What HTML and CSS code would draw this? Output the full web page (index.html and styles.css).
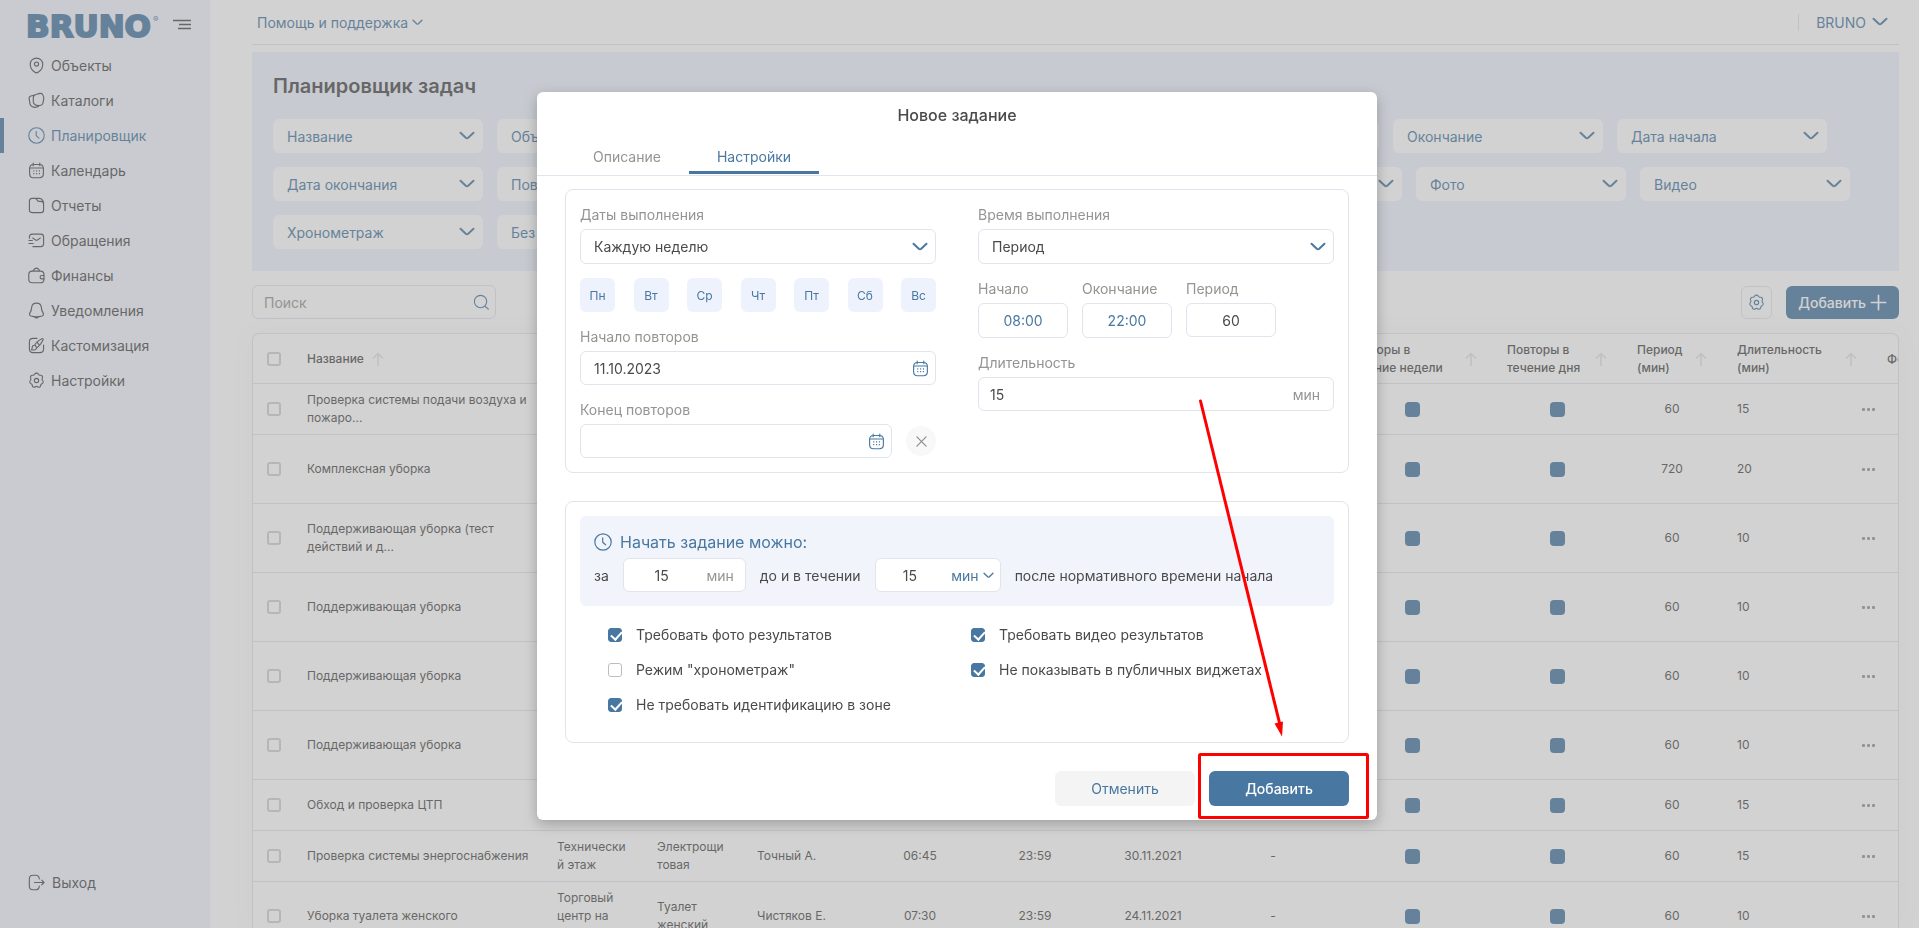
FILE: index.html
```html
<!DOCTYPE html>
<html lang="ru">
<head>
<meta charset="utf-8">
<title>Планировщик задач</title>
<link rel="stylesheet" href="styles.css">
</head>
<body>
<svg class="sprite" aria-hidden="true">
  <symbol id="pin" viewBox="0 0 18 18"><path d="M9 1.2c-3.8 0-6.6 2.9-6.6 6.400 0 3.700 2.500 7 4.900 8.600 1.100.7 2.300.7 3.400 0 2.400-1.600 4.900-4.900 4.900-8.600C15.600 4.100 12.800 1.200 9 1.200z"/><circle cx="9" cy="7.500" r="2.200"/></symbol>
  <symbol id="cards" viewBox="0 0 18 18"><path d="M8.300 2.700 12.600 1.500c1.200-.3 2.200.1 2.900 1.100.9 1.300 1.500 3.200 1.100 5.300l-.8 3.800c-.3 1.300-1 2.100-2.300 2.300-2 .4-4.400.3-6-.6-1.300-.7-1.900-1.600-1.900-3V6c0-1.700 1-2.900 2.700-3.300z"/><path d="M6.300 3.400 3 4.300C1.600 4.700 1 5.700 1.200 7.200l.9 5.300c.3 1.500 1.100 2.600 2.600 3.200 1.700.7 3.800.6 5.400 0 .8-.3 1.400-.8 1.700-1.400"/></symbol>
  <symbol id="clock" viewBox="0 0 18 18"><circle cx="9" cy="9" r="8.200"/><path d="M8.700 4.800v4.400l2.900 2.600"/></symbol>
  <symbol id="calendar" viewBox="0 0 18 18"><path d="M1.700 7c0-2.900 1.200-4.400 4-4.400h6.600c2.800 0 4 1.500 4 4.400v5.300c0 2.900-1.200 4.400-4 4.400H5.700c-2.800 0-4-1.500-4-4.400zM1.700 6.300h14.600M5.500 1v3M12.500 1v3"/><path class="dots" d="M5.500 9.500h1.200M8.500 9.500h1.200M11.500 9.500h1.200M5.500 12.300h1.200M8.500 12.300h1.200M11.500 12.300h1.200"/></symbol>
  <symbol id="folder" viewBox="0 0 18 18"><path d="M1.500 4.300c0-1.900.9-2.800 2.800-2.800h3c1.300 0 1.700.4 2.100 1.400.5 1.200 1 1.700 2.400 1.700h1.900c1.900 0 2.800.9 2.800 2.800v6.300c0 1.900-.9 2.800-2.800 2.800H4.300c-1.900 0-2.800-.9-2.800-2.800zM8 1.500h4c1.900 0 3 .8 4 2.800l.5 2.200"/></symbol>
  <symbol id="mail" viewBox="0 0 18 18"><path d="M1.500 6.500V5.300c0-2 1-3 3-3h9c2 0 3 1 3 3v7.200c0 2-1 3-3 3H5.200M5 6.400l2.700 1.900c.9.600 1.700.6 2.600 0L13 6.400M1 9h3.600M1 12.200h4.500"/></symbol>
  <symbol id="wallet" viewBox="0 0 18 18"><path d="M.8 8.200c0-2.500 1.200-3.800 3.700-3.800h8.700c2.500 0 3.700 1.300 3.700 3.800v4.700c0 2.500-1.200 3.800-3.700 3.800H4.500C2 16.700.8 15.400.8 12.900zM5 4.300l2-2.200c1.200-1.200 2.600-1.200 3.800 0l2 2.200M17.200 9h-2.600c-2.400 0-2.400 3.600 0 3.600h2.600"/></symbol>
  <symbol id="bell" viewBox="0 0 18 18"><path d="M9 1.200c-3 0-5 2.100-5.200 5-.2 2.600-.6 3.700-1.700 5.300-1 1.500-.4 2.900 1.100 3.400 3.700 1.100 7.900 1.100 11.600 0 1.500-.5 2.100-1.900 1.100-3.400-1.100-1.600-1.500-2.700-1.700-5.300-.2-2.900-2.200-5-5.200-5zM6.800 15.900c1.100 1.300 3.300 1.300 4.400 0"/></symbol>
  <symbol id="brush" viewBox="0 0 18 18"><path d="M9.500 1.500H5.300c-2.500 0-3.800 1.300-3.800 3.800v7.400c0 2.500 1.300 3.800 3.800 3.800h7.400c2.500 0 3.800-1.300 3.800-3.800V8.500"/><path d="M9.300 11.300C11.700 10 14 7.200 16 3c.4-.9-.3-1.600-1.200-1.200C11 3.600 8.400 6 7.200 8.400zM7.200 8.400l2.100 2.900M6.900 8.700c-1.800.1-2.500 1-2.500 2.600 0 .9-.2 1.500-.8 2.200 2.800.6 5.400.1 5.700-2.200M10 6l2 2.600"/></symbol>
  <symbol id="gear" viewBox="0 0 18 18"><circle cx="9" cy="9" r="2.300"/><path d="M7 2.400c.8-1.600 3.200-1.600 4 0 .5.900 1 1.100 2 1 1.800-.2 3 1.700 2.100 3.300-.5.900-.4 1.300.2 2.100 1.400 1.200.9 3.100-.6 3.600-.9.400-1.200.7-1.200 1.600 0 1.800-2 2.700-3.300 1.600-.8-.6-1.600-.6-2.400 0-1.300 1.100-3.300.2-3.300-1.600 0-.9-.3-1.200-1.200-1.600-1.500-.5-2-2.400-.6-3.600.6-.8.700-1.200.2-2.100C2 5.100 3.200 3.200 5 3.400c1 .1 1.500-.1 2-1z"/></symbol>
  <symbol id="exit" viewBox="0 0 18 18"><path d="M12 5.200C11.800 2.600 10.700 1.300 8 1.300H5.300c-2.700 0-3.900 1.300-3.900 4v7.400c0 2.700 1.200 4 3.900 4H8c2.700 0 3.800-1.300 4-3.900M6.800 9h10M14.500 6.500 17 9l-2.500 2.500"/></symbol>
  <symbol id="chevron" viewBox="0 0 16 10"><path d="m1.500 1.800 5.300 5c.8.700 1.600.7 2.400 0l5.300-5"/></symbol>
  <symbol id="search" viewBox="0 0 18 18"><circle cx="8" cy="8" r="6.500"/><path d="m13 13.200 3.300 2.800"/></symbol>
  <symbol id="plus" viewBox="0 0 18 18"><path d="M9 1.500v15M1.500 9h15"/></symbol>
  <symbol id="sort" viewBox="0 0 12 14"><path d="M6 13.500V1.500M1.500 6 6 1.500 10.500 6"/></symbol>
  <symbol id="cross" viewBox="0 0 12 12"><path d="m1 1 10 10M11 1 1 11"/></symbol>
</svg>

<div class="app">
  <aside class="sidebar">
    <div class="brand">
      <a class="logo" href="#">BRUNO<sup class="logo-mark">®</sup></a>
      <button class="burger" type="button" aria-label="Меню"><svg viewBox="0 0 18 11"><path d="M0 1.500h18M6 5.500h12M5 9.500h13"/></svg></button>
    </div>
    <nav class="nav">
      <a class="nav-item" href="#"><svg class="icon"><use href="#pin"/></svg>Объекты</a>
      <a class="nav-item" href="#"><svg class="icon"><use href="#cards"/></svg>Каталоги</a>
      <a class="nav-item active" href="#"><svg class="icon"><use href="#clock"/></svg>Планировщик</a>
      <a class="nav-item" href="#"><svg class="icon"><use href="#calendar"/></svg>Календарь</a>
      <a class="nav-item" href="#"><svg class="icon"><use href="#folder"/></svg>Отчеты</a>
      <a class="nav-item" href="#"><svg class="icon"><use href="#mail"/></svg>Обращения</a>
      <a class="nav-item" href="#"><svg class="icon"><use href="#wallet"/></svg>Финансы</a>
      <a class="nav-item" href="#"><svg class="icon"><use href="#bell"/></svg>Уведомления</a>
      <a class="nav-item" href="#"><svg class="icon"><use href="#brush"/></svg>Кастомизация</a>
      <a class="nav-item" href="#"><svg class="icon"><use href="#gear"/></svg>Настройки</a>
    </nav>
    <a class="nav-item nav-exit" href="#"><svg class="icon"><use href="#exit"/></svg>Выход</a>
  </aside>

  <main class="main">
    <header class="topbar">
      <button class="top-link" type="button">Помощь и поддержка<svg class="chevron small"><use href="#chevron"/></svg></button>
      <button class="top-link account" type="button">BRUNO<svg class="chevron"><use href="#chevron"/></svg></button>
    </header>

    <section class="filters">
      <h1 class="page-title">Планировщик задач</h1>
      <div class="filter-row">
        <div class="pick"><select aria-label="Название"><option>Название</option></select><svg class="chevron"><use href="#chevron"/></svg></div>
        <div class="pick"><select aria-label="Объект"><option>Объект</option></select><svg class="chevron"><use href="#chevron"/></svg></div>
        <div class="pick"><select aria-label="Зона"><option>Зона</option></select><svg class="chevron"><use href="#chevron"/></svg></div>
        <div class="pick"><select aria-label="Сотрудник"><option>Сотрудник</option></select><svg class="chevron"><use href="#chevron"/></svg></div>
        <div class="pick"><select aria-label="Начало"><option>Начало</option></select><svg class="chevron"><use href="#chevron"/></svg></div>
        <div class="pick"><select aria-label="Окончание"><option>Окончание</option></select><svg class="chevron"><use href="#chevron"/></svg></div>
        <div class="pick"><select aria-label="Дата начала"><option>Дата начала</option></select><svg class="chevron"><use href="#chevron"/></svg></div>
      </div>
      <div class="filter-row">
        <div class="pick"><select aria-label="Дата окончания"><option>Дата окончания</option></select><svg class="chevron"><use href="#chevron"/></svg></div>
        <div class="pick wide"><select aria-label="Повторы в течение недели"><option>Повторы в течение недели</option></select><svg class="chevron"><use href="#chevron"/></svg></div>
        <div class="pick"><select aria-label="Повторы в день"><option>Повторы в день</option></select><svg class="chevron"><use href="#chevron"/></svg></div>
        <div class="pick"><select aria-label="Период"><option>Период</option></select><svg class="chevron"><use href="#chevron"/></svg></div>
        <div class="pick"><select aria-label="Длительность"><option>Длительность</option></select><svg class="chevron"><use href="#chevron"/></svg></div>
        <div class="pick"><select aria-label="Фото"><option>Фото</option></select><svg class="chevron"><use href="#chevron"/></svg></div>
        <div class="pick"><select aria-label="Видео"><option>Видео</option></select><svg class="chevron"><use href="#chevron"/></svg></div>
      </div>
      <div class="filter-row">
        <div class="pick"><select aria-label="Хронометраж"><option>Хронометраж</option></select><svg class="chevron"><use href="#chevron"/></svg></div>
        <div class="pick"><select aria-label="Без идентификации"><option>Без идентификации</option></select><svg class="chevron"><use href="#chevron"/></svg></div>
      </div>
    </section>

    <div class="toolbar">
      <label class="search"><input type="search" placeholder="Поиск" aria-label="Поиск"><svg class="icon"><use href="#search"/></svg></label>
      <button class="tool-btn" type="button" aria-label="Настройки таблицы"><svg class="icon"><use href="#gear"/></svg></button>
      <button class="add-btn" type="button">Добавить<svg class="icon"><use href="#plus"/></svg></button>
    </div>

    <div class="table-box">
      <table class="tasks">
        <colgroup><col class="c-check"><col class="c-name"><col class="c-place"><col class="c-place"><col class="c-staff"><col class="c-start"><col class="c-end"><col class="c-date"><col class="c-date"><col class="c-week"><col class="c-day"><col class="c-period"><col class="c-length"><col class="c-photo"><col class="c-more"></colgroup>
        <thead>
          <tr>
            <th><input class="box" type="checkbox" aria-label="Выбрать все"></th>
            <th><div class="head tight">Название<svg class="sort"><use href="#sort"/></svg></div></th>
            <th>Объект</th><th>Зона</th><th>Сотрудник</th><th>Начало</th><th>Конец</th><th>Дата начала</th><th>Дата конца</th>
            <th><div class="head">Повторы в<br>течение недели<svg class="sort"><use href="#sort"/></svg></div></th>
            <th><div class="head">Повторы в<br>течение дня<svg class="sort"><use href="#sort"/></svg></div></th>
            <th><div class="head">Период<br>(мин)<svg class="sort"><use href="#sort"/></svg></div></th>
            <th><div class="head">Длительность<br>(мин)<svg class="sort"><use href="#sort"/></svg></div></th>
            <th>Фото</th><th></th>
          </tr>
        </thead>
        <tbody>
          <tr><td><input class="box" type="checkbox" aria-label="Выбрать"></td><td>Проверка системы подачи воздуха и пожаро...</td><td></td><td></td><td></td><td></td><td></td><td></td><td></td><td class="mid"><i class="mark"></i></td><td class="mid"><i class="mark"></i></td><td class="mid">60</td><td>15</td><td></td><td class="more"><button type="button" aria-label="Действия"></button></td></tr>
          <tr class="tall"><td><input class="box" type="checkbox" aria-label="Выбрать"></td><td>Комплексная уборка</td><td></td><td></td><td></td><td></td><td></td><td></td><td></td><td class="mid"><i class="mark"></i></td><td class="mid"><i class="mark"></i></td><td class="mid">720</td><td>20</td><td></td><td class="more"><button type="button" aria-label="Действия"></button></td></tr>
          <tr class="tall"><td><input class="box" type="checkbox" aria-label="Выбрать"></td><td>Поддерживающая уборка (тест действий и д...</td><td></td><td></td><td></td><td></td><td></td><td></td><td></td><td class="mid"><i class="mark"></i></td><td class="mid"><i class="mark"></i></td><td class="mid">60</td><td>10</td><td></td><td class="more"><button type="button" aria-label="Действия"></button></td></tr>
          <tr class="tall"><td><input class="box" type="checkbox" aria-label="Выбрать"></td><td>Поддерживающая уборка</td><td></td><td></td><td></td><td></td><td></td><td></td><td></td><td class="mid"><i class="mark"></i></td><td class="mid"><i class="mark"></i></td><td class="mid">60</td><td>10</td><td></td><td class="more"><button type="button" aria-label="Действия"></button></td></tr>
          <tr class="tall"><td><input class="box" type="checkbox" aria-label="Выбрать"></td><td>Поддерживающая уборка</td><td></td><td></td><td></td><td></td><td></td><td></td><td></td><td class="mid"><i class="mark"></i></td><td class="mid"><i class="mark"></i></td><td class="mid">60</td><td>10</td><td></td><td class="more"><button type="button" aria-label="Действия"></button></td></tr>
          <tr class="tall"><td><input class="box" type="checkbox" aria-label="Выбрать"></td><td>Поддерживающая уборка</td><td></td><td></td><td></td><td></td><td></td><td></td><td></td><td class="mid"><i class="mark"></i></td><td class="mid"><i class="mark"></i></td><td class="mid">60</td><td>10</td><td></td><td class="more"><button type="button" aria-label="Действия"></button></td></tr>
          <tr><td><input class="box" type="checkbox" aria-label="Выбрать"></td><td>Обход и проверка ЦТП</td><td></td><td></td><td></td><td></td><td></td><td></td><td></td><td class="mid"><i class="mark"></i></td><td class="mid"><i class="mark"></i></td><td class="mid">60</td><td>15</td><td></td><td class="more"><button type="button" aria-label="Действия"></button></td></tr>
          <tr><td><input class="box" type="checkbox" aria-label="Выбрать"></td><td>Проверка системы энергоснабжения</td><td>Технический этаж</td><td>Электрощитовая</td><td>Точный А.</td><td class="mid">06:45</td><td class="mid">23:59</td><td class="mid">30.11.2021</td><td class="mid">-</td><td class="mid"><i class="mark"></i></td><td class="mid"><i class="mark"></i></td><td class="mid">60</td><td>15</td><td></td><td class="more"><button type="button" aria-label="Действия"></button></td></tr>
          <tr class="tall"><td><input class="box" type="checkbox" aria-label="Выбрать"></td><td>Уборка туалета женского</td><td>Торговый центр на Садовой</td><td>Туалет женский</td><td>Чистяков Е.</td><td class="mid">07:30</td><td class="mid">23:59</td><td class="mid">24.11.2021</td><td class="mid">-</td><td class="mid"><i class="mark"></i></td><td class="mid"><i class="mark"></i></td><td class="mid">60</td><td>10</td><td></td><td class="more"><button type="button" aria-label="Действия"></button></td></tr>
        </tbody>
      </table>
    </div>
  </main>
</div>

<div class="overlay">
  <form class="modal" role="dialog" aria-labelledby="modal-title">
    <h2 class="modal-title" id="modal-title">Новое задание</h2>
    <div class="tabs" role="tablist">
      <button class="tab" type="button" role="tab">Описание</button>
      <button class="tab current" type="button" role="tab" aria-selected="true">Настройки</button>
    </div>

    <div class="modal-body">
      <section class="card columns">
        <div class="stack">
          <div class="field">
            <label for="dates">Даты выполнения</label>
            <div class="pick"><select id="dates"><option>Каждую неделю</option></select><svg class="chevron"><use href="#chevron"/></svg></div>
          </div>
          <div class="days">
            <button type="button">Пн</button><button type="button">Вт</button><button type="button">Ср</button><button type="button">Чт</button><button type="button">Пт</button><button type="button">Сб</button><button type="button">Вс</button>
          </div>
          <div class="field">
            <label for="from">Начало повторов</label>
            <div class="control"><input id="from" type="text" value="11.10.2023"><svg class="icon"><use href="#calendar"/></svg></div>
          </div>
          <div class="field">
            <label for="till">Конец повторов</label>
            <div class="line">
              <div class="control"><input id="till" type="text"><svg class="icon"><use href="#calendar"/></svg></div>
              <button class="clear" type="button" aria-label="Очистить"><svg><use href="#cross"/></svg></button>
            </div>
          </div>
        </div>
        <div class="stack">
          <div class="field">
            <label for="time">Время выполнения</label>
            <div class="pick"><select id="time"><option>Период</option></select><svg class="chevron"><use href="#chevron"/></svg></div>
          </div>
          <div class="line">
            <div class="field third"><label for="t1">Начало</label><div class="control time"><input id="t1" type="text" value="08:00"></div></div>
            <div class="field third"><label for="t2">Окончание</label><div class="control time"><input id="t2" type="text" value="22:00"></div></div>
            <div class="field third"><label for="t3">Период</label><div class="control centered"><input id="t3" type="text" value="60"></div></div>
          </div>
          <div class="field">
            <label for="len">Длительность</label>
            <div class="control length"><input id="len" type="text" value="15"><span class="unit">мин</span></div>
          </div>
        </div>
      </section>

      <section class="card rules">
        <div class="start">
          <h3 class="start-title"><svg class="icon"><use href="#clock"/></svg>Начать задание можно:</h3>
          <div class="start-line">
            <label for="before">за</label>
            <div class="control centered span"><input id="before" type="text" value="15"><span class="unit">мин</span></div>
            <label for="after">до и в течении</label>
            <div class="control centered span with-pick"><input id="after" type="text" value="15"><button class="unit-pick" type="button">мин<svg class="chevron small"><use href="#chevron"/></svg></button></div>
            <span>после нормативного времени начала</span>
          </div>
        </div>
        <div class="checks">
          <label><input class="box" type="checkbox" checked>Требовать фото результатов</label>
          <label><input class="box" type="checkbox" checked>Требовать видео результатов</label>
          <label><input class="box" type="checkbox">Режим "хронометраж"</label>
          <label><input class="box" type="checkbox" checked>Не показывать в публичных виджетах</label>
          <label><input class="box" type="checkbox" checked>Не требовать идентификацию в зоне</label>
        </div>
      </section>

      <footer class="actions">
        <button class="btn plain" type="button">Отменить</button>
        <button class="btn primary" type="submit">Добавить</button>
      </footer>
    </div>

    <svg class="pointer" viewBox="0 0 174 422" aria-hidden="true">
      <path class="stroke" d="M4.500 2 84 326"/>
      <path class="tip" d="m78.500 324.500 8.500-2-1 15z"/>
      <rect class="stroke" x="3.500" y="355.500" width="168" height="63" rx="1"/>
    </svg>
  </form>
</div>
</body>
</html>
```
FILE: styles.css
```css
:root {
  --blue: #4878a1;
  --text: #4a4a4a;
  --muted: #949494;
  --line: #e1e4ec;
  --tint: #edf2fd;
}

* { box-sizing: border-box; }

body {
  margin: 0;
  overflow: hidden;
  background: #fff;
  color: var(--text);
  font: 14px/21px Inter, "Liberation Sans", sans-serif;
}

h1, h2, h3 { margin: 0; }
a { color: inherit; text-decoration: none; }
button, input, select { margin: 0; padding: 0; border: 0; background: none; color: inherit; font: inherit; }
svg { flex: none; fill: none; stroke: currentColor; stroke-linecap: round; stroke-linejoin: round; }

.sprite { position: absolute; width: 0; height: 0; }
.icon { width: 17px; height: 17px; stroke-width: 1.2; }
.dots { stroke-width: 1.3; stroke-linecap: butt; }
.chevron { width: 16px; height: 10px; color: var(--blue); stroke-width: 2; }
.chevron.small { width: 11px; height: 7px; }

/* Shell */
.app { display: flex; height: 100vh; }

.sidebar {
  display: flex;
  flex: none;
  flex-direction: column;
  width: 210px;
  padding-bottom: 28px;
  background: #f1f4fb;
}

.brand { display: flex; align-items: flex-start; justify-content: space-between; height: 48px; padding: 11px 19px 0 26px; }
.logo {
  display: flex;
  color: var(--blue);
  font: bold 31px/31px "DejaVu Sans", sans-serif;
  -webkit-text-stroke: 2px var(--blue);
}
.logo-mark { font: 8px/8px Inter, sans-serif; -webkit-text-stroke: 0; padding: 4px 0 0 2px; }
.burger { display: flex; width: 18px; padding-top: 8px; }
.burger svg { width: 18px; height: 11px; stroke-width: 1.7; stroke-linecap: butt; }

.nav-item { display: flex; align-items: center; gap: 6px; height: 35px; padding-left: 28px; }
.nav-item.active { padding-left: 24px; border-left: 4px solid var(--blue); color: var(--blue); }
.nav-exit { gap: 7px; margin-top: auto; }

.main { display: flex; flex: 1; flex-direction: column; min-width: 0; padding: 0 20px 0 42px; }

.topbar { display: flex; flex: none; justify-content: space-between; align-items: center; height: 45px; margin-bottom: 7px; border-bottom: 1px solid var(--line); }
.top-link { display: flex; align-items: center; gap: 4px; padding: 0 5px; color: var(--blue); }
.account { gap: 6px; height: 17px; padding: 0 11px 0 17px; border-left: 1px solid var(--line); }

/* Filters */
.filters { display: flex; flex: none; flex-direction: column; gap: 14px; padding: 20px 21px 22px; overflow: hidden; background: var(--tint); }
.page-title { margin-bottom: 5px; font-size: 20px; font-weight: 600; line-height: 28px; }
.filter-row { display: flex; gap: 14px; }

.pick { position: relative; display: flex; align-items: center; height: 35px; border: 1px solid var(--line); border-radius: 6px; background: #fff; }
.pick select { width: 100%; height: 100%; padding: 0 36px 0 13px; appearance: none; border-radius: 6px; }
.pick .chevron { position: absolute; right: 7px; pointer-events: none; }
.filter-row .pick { flex: none; width: 210px; height: 34px; border-color: #fff; color: var(--blue); }
.filter-row .wide { width: 233px; }

/* Toolbar */
.toolbar { display: flex; flex: none; align-items: center; gap: 14px; margin: 14px 0; }
.search { display: flex; align-items: center; width: 244px; height: 34px; margin-right: auto; padding: 0 5px 0 11px; border: 1px solid var(--line); border-radius: 6px; color: var(--blue); }
.search input { flex: 1; min-width: 0; outline: 0; }
.search input::placeholder { color: var(--muted); opacity: 1; }
.tool-btn { display: flex; align-items: center; justify-content: center; width: 31px; height: 33px; border: 1px solid var(--line); border-radius: 6px; color: var(--blue); }
.add-btn { display: flex; align-items: center; gap: 4px; height: 33px; padding: 0 12px; border-radius: 6px; background: var(--blue); color: #fff; font-weight: 500; }
.add-btn .icon { stroke-width: 1.800; }

/* Table */
.table-box { flex: 1; min-height: 0; overflow: hidden; border: 1px solid var(--line); border-bottom: 0; border-radius: 7px 7px 0 0; box-shadow: 0 0 28px rgba(0, 0, 0, .04); }
.tasks { width: 1779px; table-layout: fixed; border-spacing: 0; font-size: 12px; line-height: 18px; }
.tasks th, .tasks td { height: 51px; padding: 7px 15px; border-bottom: 1px solid var(--line); text-align: left; vertical-align: middle; overflow-wrap: anywhere; }
.tasks th { height: 50px; padding: 6px 15px; font-weight: 500; }
.tasks .tall td { height: 69px; }
.tasks .mid { text-align: center; }
.tasks th:first-child, .tasks td:first-child { padding: 0 0 0 14px; }
.tasks td:nth-child(2) { padding-right: 10px; }
.c-check { width: 39px; }
.c-name { width: 250px; }
.c-place { width: 100px; }
.c-staff { width: 121px; }
.c-start { width: 114px; }
.c-end { width: 116px; }
.c-date { width: 120px; }
.c-week { width: 159px; }
.c-day { width: 130px; }
.c-period { width: 100px; }
.c-length { width: 150px; }
.c-photo { width: 100px; }
.c-more { width: 60px; }

.head { display: flex; position: relative; align-items: center; }
.head .sort { position: absolute; right: 0; }
.head.tight { gap: 8px; }
.head.tight .sort { position: static; }
.sort { width: 12px; height: 14px; color: #dfe1e8; stroke-width: 1.500; }

.mark { display: inline-block; width: 15px; height: 15px; border-radius: 4px; background: var(--blue); vertical-align: middle; }
.tasks .more { position: sticky; right: 0; padding: 0; background: #fff; text-align: center; }
.more button { width: 3px; height: 3px; border-radius: 1px; background: var(--muted); box-shadow: -5px 0 var(--muted), 5px 0 var(--muted); vertical-align: middle; }

.box { display: block; flex: none; position: relative; width: 14px; height: 14px; margin: 0; appearance: none; border: 1px solid #bdbdbd; border-radius: 3px; background: #fff; }
.tasks .box { border-width: 2px; border-color: #cfcfcf; }
.box:checked { border-color: var(--blue); background: var(--blue); }
.box:checked::before { content: ""; position: absolute; left: 4px; top: 0; width: 5px; height: 9px; border: solid #fff; border-width: 0 2px 2px 0; transform: rotate(42deg); }

/* Dialog */
.overlay { position: fixed; inset: 0; display: flex; align-items: flex-start; justify-content: center; padding: 92px 5px 0 0; background: rgba(145, 145, 145, .41); }
.modal { position: relative; width: 840px; border-radius: 6px; background: #fff; box-shadow: 0 4px 14px rgba(0, 0, 0, .25); }
.modal-title { padding: 11px 0 13px; font-size: 16px; font-weight: 500; line-height: 24px; text-align: center; }
.tabs { display: flex; height: 36px; padding: 0 28px; border-bottom: 1px solid var(--line); }
.tab { height: 34px; padding: 1px 28px 0; border-bottom: 3px solid transparent; color: var(--muted); }
.tab.current { border-bottom-color: var(--blue); border-radius: 2px 2px 0 0; color: var(--blue); }
.modal-body { display: flex; flex-direction: column; gap: 28px; padding: 13px 28px 14px; }

.card { padding: 14px; border: 1px solid var(--line); border-radius: 8px; }
.columns { display: grid; grid-template-columns: 1fr 1fr; gap: 42px; }
.stack { display: flex; flex-direction: column; gap: 14px; }
.field { display: flex; flex-direction: column; gap: 4px; }
.field label { color: var(--muted); }
.line { display: flex; align-items: center; gap: 14px; }
.line > .control { flex: 1; }

.control { display: flex; align-items: center; height: 34px; padding: 0 6px 0 13px; border: 1px solid var(--line); border-radius: 6px; background: #fff; }
.control input { flex: 1; width: 100%; min-width: 0; outline: 0; }
.control .icon { color: var(--blue); }
.third { width: 90px; align-self: flex-start; }
.centered, .time { padding: 0 11px; text-align: center; }
.time { height: 35px; color: var(--blue); }
.control.centered input, .control.time input { text-align: center; }
.length { padding: 0 13px 0 11px; }
.unit { color: var(--muted); }

.days { display: flex; justify-content: space-between; }
.days button { width: 35px; height: 34px; border-radius: 6px; background: var(--tint); color: var(--blue); font-size: 12px; }
.clear { display: flex; align-items: center; justify-content: center; width: 30px; height: 30px; border-radius: 50%; background: #f8f8f8; color: #8c8c8c; }
.clear svg { width: 11px; height: 11px; stroke-width: 1.300; }

.start { padding: 14px; border-radius: 6px; background: #f1f4fb; }
.start-title { display: flex; align-items: center; gap: 8px; margin-bottom: 4px; color: var(--blue); font-size: 16px; font-weight: 400; line-height: 24px; }
.start-title .icon { width: 18px; height: 18px; }
.start-line { display: flex; align-items: center; gap: 14px; }
.span { gap: 18px; width: 123px; }
.span.with-pick { width: 126px; padding-right: 6px; }
.unit-pick { display: flex; align-items: center; gap: 4px; color: var(--blue); }

.checks { display: grid; grid-template-columns: 1fr 1fr; grid-auto-rows: 35px; padding: 11px 0 6px 28px; }
.checks label { display: flex; align-items: center; gap: 14px; }

.actions { display: flex; justify-content: flex-end; gap: 14px; }
.btn { width: 140px; height: 35px; border-radius: 6px; }
.plain { background: #f4f4f4; color: var(--blue); }
.primary { background: var(--blue); color: #fff; font-weight: 500; }

/* Pointer drawn over the dialog */
.pointer { position: absolute; right: 7px; bottom: -1px; width: 174px; height: 422px; pointer-events: none; }
.pointer .stroke { stroke: #f00; stroke-width: 3; }
.pointer .tip { fill: #f00; stroke: none; }
```
